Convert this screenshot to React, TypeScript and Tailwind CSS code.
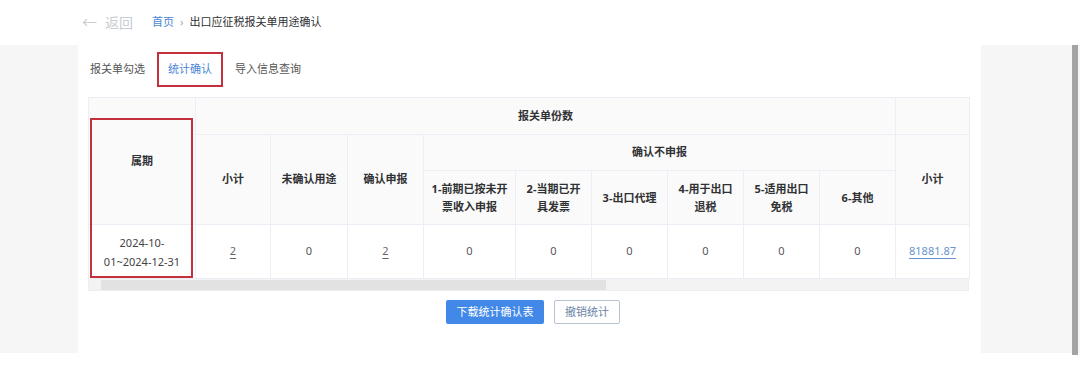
import React from "react";

const th = "border border-[#ebeef5] bg-[#fafafa] font-bold text-[#303133] text-center align-middle p-0";
const td = "border border-[#ebeef5] bg-white text-center align-middle text-[#555] p-0";

const reasonLines = [
  ["1-前期已按未开", "票收入申报"],
  ["2-当期已开", "具发票"],
  ["3-出口代理"],
  ["4-用于出口", "退税"],
  ["5-适用出口", "免税"],
  ["6-其他"],
];

function App() {
  return (
    <div className="w-[1080px] h-[373px] bg-white font-['Noto_Sans','Noto_Sans_CJK_SC',sans-serif] text-[11px] overflow-hidden">
      <div className="h-[45px] flex items-center pl-[82px]">
        <span className="text-[#c8ccd3] text-[15px]">←</span>
        <span className="ml-[8px] text-[#c8ccd3] text-[14px]">返回</span>
        <span className="ml-[19px] text-[#4a86d8]">首页</span>
        <span className="mx-[6px] text-[#aaa]">›</span>
        <span className="text-[#303133]">出口应征税报关单用途确认</span>
      </div>

      <div className="h-[308px] bg-[#f6f6f6] flex">
        <div className="ml-[78px] w-[903px] bg-white">
          <div className="flex items-stretch h-[35px] mt-[7px] pl-[1px] gap-[1px]">
            <div className="px-[11px] flex items-center text-[#555]">报关单勾选</div>
            <div className="px-[9px] flex items-center text-[#4a86d8] border-2 border-[#c4303c]">统计确认</div>
            <div className="px-[11px] flex items-center text-[#555]">导入信息查询</div>
          </div>

          <div className="relative ml-[10px] mt-[10px] w-[881px]">
            <table className="table-fixed border-collapse w-[881px]">
              <colgroup>
                <col className="w-[107px]" />
                <col className="w-[75px]" />
                <col className="w-[77px]" />
                <col className="w-[76px]" />
                <col className="w-[92px]" />
                <col className="w-[76px]" />
                <col className="w-[76px]" />
                <col className="w-[76px]" />
                <col className="w-[76px]" />
                <col className="w-[76px]" />
                <col className="w-[74px]" />
              </colgroup>
              <thead>
                <tr className="h-[37px]">
                  <th rowSpan={3} className={th}>属期</th>
                  <th colSpan={9} className={th}>报关单份数</th>
                  <th className={th}></th>
                </tr>
                <tr className="h-[36px]">
                  <th rowSpan={2} className={th}>小计</th>
                  <th rowSpan={2} className={th}>未确认用途</th>
                  <th rowSpan={2} className={th}>确认申报</th>
                  <th colSpan={6} className={th}>确认不申报</th>
                  <th rowSpan={2} className={th}>小计</th>
                </tr>
                <tr className="h-[54px]">
                  {reasonLines.map((lines) => (
                    <th key={lines[0]} className={th}>
                      <div className="leading-[18px]">
                        {lines.map((l) => (
                          <div key={l}>{l}</div>
                        ))}
                      </div>
                    </th>
                  ))}
                </tr>
              </thead>
              <tbody>
                <tr className="h-[54px]">
                  <td className={td}>
                    <div className="leading-[19px] text-[#444]">
                      <div>2024-10-</div>
                      <div>01~2024-12-31</div>
                    </div>
                  </td>
                  <td className={td}>
                    <span className="underline underline-offset-[3px] text-[#666]">2</span>
                  </td>
                  <td className={td}>0</td>
                  <td className={td}>
                    <span className="underline underline-offset-[3px] text-[#666]">2</span>
                  </td>
                  <td className={td}>0</td>
                  <td className={td}>0</td>
                  <td className={td}>0</td>
                  <td className={td}>0</td>
                  <td className={td}>0</td>
                  <td className={td}>0</td>
                  <td className={td}>
                    <span className="underline underline-offset-[3px] text-[#6a93cf]">81881.87</span>
                  </td>
                </tr>
              </tbody>
            </table>
            <div className="h-[12px] bg-[#f3f3f3] border-x border-b border-[#ebeef5] flex items-center">
              <div className="ml-[12px] w-[505px] h-[10px] bg-[#e2e2e2]"></div>
            </div>
            <div className="absolute left-[2px] top-[21px] w-[103px] h-[160px] border-2 border-[#c4303c] pointer-events-none"></div>
          </div>

          <div className="flex justify-center gap-[10px] mt-[9px] ml-[7px]">
            <button className="w-[98px] h-[24px] bg-[#4188e8] text-white rounded-[2px]">下载统计确认表</button>
            <button className="w-[66px] h-[24px] bg-white border border-[#b8c4d4] text-[#6b84a8] rounded-[2px]">撤销统计</button>
          </div>
        </div>
        <div className="ml-auto mr-[2px] w-[6px] h-[310px] bg-[#a3a3a3]"></div>
      </div>
    </div>
  );
}

export default App;
